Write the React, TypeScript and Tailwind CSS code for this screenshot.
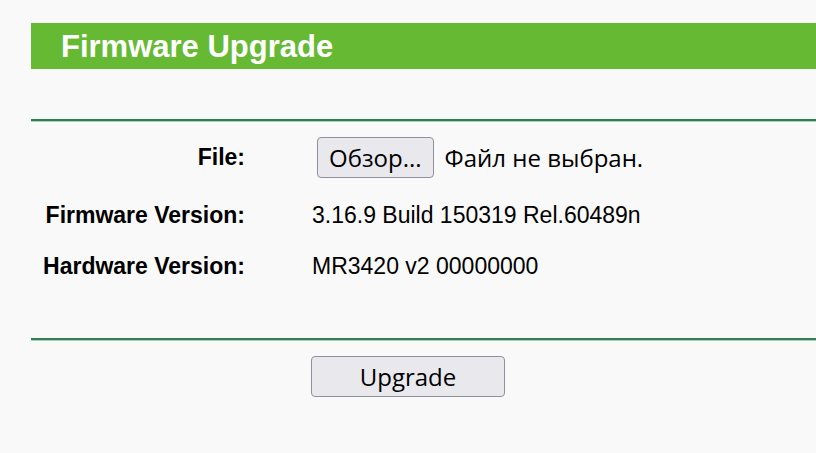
import React from 'react';

const Divider: React.FC = () => (
    <div>
        <div className="h-[2px] bg-[#2f7f50]" />
        <div className="h-[1px] bg-[#a9d3b8]" />
    </div>
);

export default function App() {
    const rows = [
        { label: 'Firmware Version:', value: '3.16.9 Build 150319 Rel.60489n' },
        { label: 'Hardware Version:', value: 'MR3420 v2 00000000' },
    ];

    return (
        <div className="min-h-[453px] bg-[#f9f9f9] pl-[31px] pt-[23px] font-['Liberation_Sans',Arial,sans-serif] text-black">
            <div className="h-[46px] bg-[#66b933] flex items-center pl-[30px]">
                <h1 className="text-[31px] font-bold text-white leading-none">Firmware Upgrade</h1>
            </div>

            <div className="mt-[50px]">
                <Divider />
            </div>

            <div className="mt-[15px] flex items-center h-[41px]">
                <div className="w-[214px] text-right text-[23px] font-bold">File:</div>
                <div className="ml-[72px] flex items-center gap-[11px] font-['Open_Sans',sans-serif] text-[24px]">
                    <button className="h-[41px] px-[11px] bg-[#e9e9ed] border border-[#8f8f9d] rounded-[4px]">
                        Обзор...
                    </button>
                    <span>Файл не выбран.</span>
                </div>
            </div>

            {rows.map((row, i) => (
                <div key={row.label} className={`flex items-center h-[26px] ${i === 0 ? 'mt-[24px]' : 'mt-[25px]'}`}>
                    <div className="w-[214px] text-right text-[23px] font-bold">{row.label}</div>
                    <div className="ml-[67px] text-[23px]">{row.value}</div>
                </div>
            ))}

            <div className="mt-[59px]">
                <Divider />
            </div>

            <div className="mt-[15px] pl-[280px]">
                <button className="w-[194px] h-[41px] bg-[#e9e9ed] border border-[#8f8f9d] rounded-[4px] font-['Open_Sans',sans-serif] text-[24px]">
                    Upgrade
                </button>
            </div>
        </div>
    );
}
